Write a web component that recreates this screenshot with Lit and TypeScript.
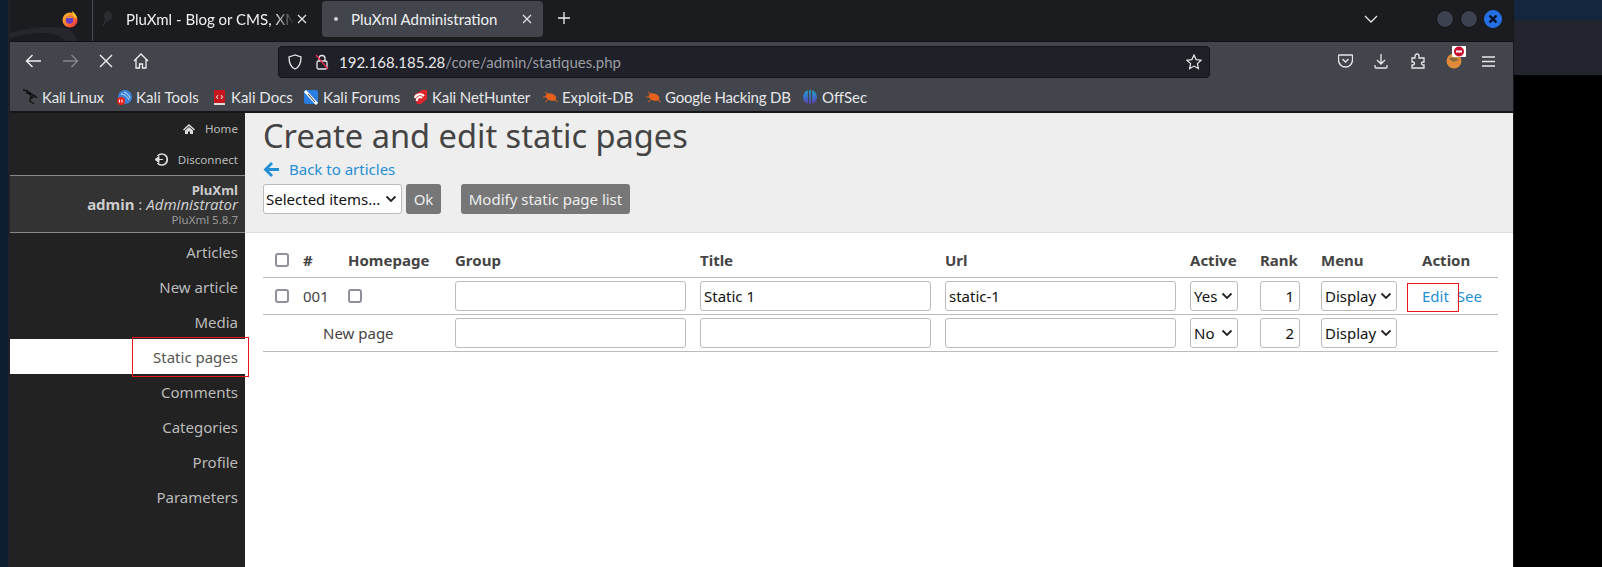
import { LitElement, html, css, svg } from "lit";
import { customElement } from "lit/decorators.js";

const chevron = "url(\"data:image/svg+xml,%3Csvg xmlns='http://www.w3.org/2000/svg' width='12' height='8'%3E%3Cpath d='M1.5 1.5 6 6l4.5-4.5' fill='none' stroke='%23222' stroke-width='1.8'/%3E%3C/svg%3E\")";

const bug = svg`<ellipse cx="9" cy="8" rx="5.500" ry="3.500" fill="#e8601c" transform="rotate(20 9 8)"/><path d="M1 8h4M3 3l4 3M3 13l4-3M13 11l3 2" stroke="#e8601c"/>`;

const bookmarks: { name: string; step: number; spacing: number; icon: ReturnType<typeof svg> }[] = [
  { name: "Kali Linux", step: 94, spacing: -0.2, icon: svg`<path d="M1 1c3 0 5 1 7 3 2 2 5 2 7 5M4 4c3 0 5 2 5 4s-2 2-1 4 3 1 4 3M12 8c-2 0-3 1-3 2" fill="none" stroke="#0d0d0d" stroke-width="1.300"/>` },
  { name: "Kali Tools", step: 95, spacing: 0.1, icon: svg`<circle cx="9" cy="8" r="7" fill="#3b82d8"/><path d="M5 5c3 0 6 2 8 6M8 3c3 1 5 3 6 6" stroke="#cfe3fa" fill="none"/><circle cx="5" cy="12" r="4" fill="#e1251b"/><path d="M3.500 10.500v3M6 10.500v3" stroke="#fff"/>` },
  { name: "Kali Docs", step: 92, spacing: 0, icon: svg`<rect x="3" y="1" width="11" height="14" fill="#c8161d"/><rect x="3" y="14" width="11" height="2" fill="#ddd"/><path d="M7 6 5.500 8 7 10M10 6l1.500 2L10 10" stroke="#fff" fill="none"/>` },
  { name: "Kali Forums", step: 109, spacing: 0, icon: svg`<rect x="1" y="1" width="14" height="14" rx="2" fill="#2a7de1"/><path d="M2 2l12 13" stroke="#fff" stroke-width="3"/><path d="M5 5l7 8" stroke="#333" stroke-width="1"/>` },
  { name: "Kali NetHunter", step: 130, spacing: -0.1, icon: svg`<path d="M2 6l8-5h5v9l-6 5H5z" fill="#e0242c"/><path d="M3 9a5 4 0 0 1 9-2M5 12a3 3 0 0 1 5-3" stroke="#fff" stroke-width="2" fill="none"/>` },
  { name: "Exploit-DB", step: 103, spacing: -0.1, icon: bug },
  { name: "Google Hacking DB", step: 157, spacing: -0.2, icon: bug },
  { name: "OffSec", step: 70, spacing: 0, icon: svg`<defs><linearGradient id="os" x1="0" y1="0" x2="0" y2="1"><stop offset="0" stop-color="#1fa3c8"/><stop offset="1" stop-color="#5b3fc0"/></linearGradient></defs><circle cx="8" cy="8" r="7" fill="url(#os)"/><path d="M6.500 1v14M9.500 1v14" stroke="#42454c" stroke-width="1.200"/>` },
];

const nav = ["Articles", "New article", "Media", "Static pages", "Comments", "Categories", "Profile", "Parameters"];

@customElement("app-root")
export class AppRoot extends LitElement {
  static styles = css`
    :host { display: flex; width: 1602px; height: 567px; overflow: hidden; background: #000; font-family: "Noto Sans", sans-serif; }
    * { box-sizing: border-box; }
    svg { display: block; flex: none; }

    .desk-left { width: 10px; flex: none; background: linear-gradient(90deg, #0e1d30 0 8px, #1e2127 8px); }
    .desk-right { flex: 1; display: flex; flex-direction: column; border-left: 1px solid #15171c; }
    .dr-a { height: 20px; background: #14263d; }
    .dr-b { height: 55px; background: #23252e; }
    .window { width: 1503px; flex: none; height: 567px; display: flex; flex-direction: column; position: relative; background: #fff; }

    .chrome-font { font-family: Lato, "Noto Sans", sans-serif; }

    .tabs { height: 41px; flex: none; background: #1b1c20; display: flex; align-items: flex-start; position: relative; color: #f0f0f2; font-size: 15px; overflow: hidden; }
    .wall { position: absolute; left: 0; bottom: 0; pointer-events: none; }
    .ff { margin: 10px 0 0 51px; }
    .sep { width: 1px; height: 41px; background: #4a4c52; margin-left: 13px; }
    .tab { height: 36px; margin-top: 1px; display: flex; align-items: center; position: relative; white-space: nowrap; }
    .tab1 { width: 229px; padding-left: 9px; }
    .tab1 .label { width: 168px; margin-left: 14px; overflow: hidden; -webkit-mask-image: linear-gradient(90deg, #000 88%, transparent); mask-image: linear-gradient(90deg, #000 88%, transparent); }
    .tab1 .x { margin-left: 3px; }
    .tab2 { width: 221px; background: #42454c; border-radius: 4px; padding-left: 9px; }
    .tab2 .label { width: 171px; margin-left: 13px; }
    .dot { width: 4px; height: 4px; margin-left: 3px; border-radius: 50%; background: #cfcfd4; }
    .plus { margin: 12px 0 0 15px; }
    .tabs-end { margin-left: auto; display: flex; align-items: center; height: 38px; }
    .tabs-end .chev { margin-right: 58px; }
    .wbtn { width: 18px; height: 18px; border-radius: 50%; background: #3c4150; border: 1px solid #111; margin-right: 6px; display: flex; align-items: center; justify-content: center; }
    .wbtn.close { background: #2470e8; border-color: #2470e8; margin-right: 11px; }

    .toolbar { height: 38px; flex: none; background: #42454c; display: flex; align-items: center; padding-top: 1px; border-top: 1px solid #111217; }
    .tool-left { display: flex; align-items: center; gap: 20px; margin-left: 15px; }
    .url { margin-left: 129px; width: 932px; height: 32px; margin-top: 1px; background: #1f2028; border: 1px solid #14151a; border-radius: 4px; display: flex; align-items: center; font-size: 15px; color: #e8e8ea; padding-left: 9px; }
    .url .lock { margin-left: 13px; }
    .url .addr { margin-left: 10px; white-space: nowrap; }
    .url .dim { color: #9b9ca2; }
    .url .star { margin-left: auto; margin-right: 7px; }
    .tool-right { display: flex; align-items: center; margin-left: 128px; gap: 21px; }
    .puzzle { margin-left: 2px; }
    .avatar { margin-top: -6px; }
    .burger { margin-left: -5px; }

    .marks { height: 32px; flex: none; background: #42454c; display: flex; align-items: center; padding: 4px 0 0 12px; font-size: 15px; color: #e6e6e8; white-space: nowrap; }
    .mark-item { display: flex; align-items: center; gap: 4px; flex: none; }
    .edge { height: 2px; flex: none; background: #15161a; }

    .page { flex: 1; display: flex; min-height: 0; color: #444; font-size: 15px; }
    .side { width: 235px; flex: none; background: #222; color: #bbb; text-align: right; }
    .side-top { height: 62px; padding: 0 7px; font-size: 11.600px; }
    .side-link { display: flex; justify-content: flex-end; align-items: center; height: 31px; gap: 10px; }
    .info { height: 58px; background: #333; border-top: 1px solid #888; border-bottom: 1px solid #888; padding: 7px 7px 0; line-height: 14px; }
    .info b { color: #ccc; }
    .info b.brand { display: block; font-size: 13.200px; line-height: 14px; }
    .info i { color: #ccc; }
    .info .who { display: block; height: 14px; line-height: 14px; }
    .info small { display: block; font-size: 11.500px; line-height: 17px; color: #999; }
    .nav { margin-top: 1px; }
    .nav a { display: block; height: 35px; line-height: 37px; padding-right: 7px; color: #bbb; }
    .nav a.on { background: #fff; color: #555; }

    .main { flex: 1; min-width: 0; }
    .head { height: 120px; background: #eee; border-bottom: 1px solid #ddd; padding: 0 18px; }
    h1 { margin: 0; font-weight: 400; font-size: 32.600px; line-height: 46px; color: #444; }
    .back { display: flex; align-items: center; height: 20px; gap: 10px; color: #258fd6; font-size: 15px; }
    .actions { display: flex; margin-top: 5px; height: 30px; }
    select, input[type="text"] { font: 15px "Noto Sans", sans-serif; color: #111; background-color: #fff; border: 1px solid #bbb; border-radius: 3px; height: 30px; margin: 0; outline: 0; }
    select { appearance: none; -webkit-appearance: none; padding: 0 0 0 3px; background-image: ${css([chevron] as unknown as TemplateStringsArray)}; background-repeat: no-repeat; background-position: right 4px center; }
    input[type="text"] { padding: 0 3px; display: block; }
    select.sel-act { width: 139px; padding-left: 2px; }
    .btn { height: 30px; background: #777; color: #eee; border-radius: 3px; display: flex; align-items: center; justify-content: center; }
    .ok { margin-left: 4px; width: 35px; }
    .mod { margin-left: 20px; width: 169px; }

    table { width: 1235px; margin: 10px 0 0 18px; border-collapse: collapse; table-layout: fixed; }
    th { height: 34px; text-align: left; font-weight: 700; padding: 0 7px 0; color: #444; border-bottom: 1px solid #bbb; white-space: nowrap; }
    td { height: 37px; padding: 0 7px; border-bottom: 1px solid #bbb; white-space: nowrap; color: #444; }
    .c0 { width: 33px; } .c1 { width: 45px; } .c2 { width: 107px; } .c3 { width: 245px; }
    .c6 { width: 70px; } .c7 { width: 61px; } .c8 { width: 90px; } .c9 { width: 94px; }
    .cb { padding-left: 12px; padding-right: 0; }
    .cbx { display: block; width: 14px; height: 14px; border: 2px solid #8f8f9d; border-radius: 3px; background: #fff; }
    .w { width: 231px; }
    .yn { width: 48px; }
    .rank { width: 40px; text-align: right; padding-right: 5px !important; }
    .menu { width: 76px; }
    .act { padding-left: 18px; padding-right: 0; }
    td a { color: #258fd6; }
    td a + a { margin-left: 8px; }
    .newp { padding-left: 60px; }

    .red { position: absolute; border: 1px solid #e8141e; pointer-events: none; }
    .red.a { left: 122px; top: 337px; width: 117px; height: 40px; }
    .red.b { left: 1397px; top: 283px; width: 52px; height: 29px; }
  `;

  private xIcon() {
    return html`<svg class="x" width="10" height="10" viewBox="0 0 10 10"><path d="M1 1l8 8M9 1 1 9" stroke="#e6e6ea" stroke-width="1.200"/></svg>`;
  }

  private row(id: boolean, title: string, url: string, active: string, rank: string) {
    return html`<tr>
      ${id
        ? html`<td class="cb"><span class="cbx"></span></td><td>001</td><td><span class="cbx"></span></td>`
        : html`<td colspan="3" class="newp">New page</td>`}
      <td><input class="w" type="text" .value=${""} /></td>
      <td><input class="w" type="text" .value=${title} /></td>
      <td><input class="w" type="text" .value=${url} /></td>
      <td><select class="yn"><option>${active}</option></select></td>
      <td><input class="rank" type="text" .value=${rank} /></td>
      <td><select class="menu"><option>Display</option></select></td>
      <td class="act">${id ? html`<a>Edit</a><a>See</a>` : ""}</td>
    </tr>`;
  }

  render() {
    return html`
      <div class="desk-left"></div>
      <div class="window">
        <div class="tabs chrome-font">
          <svg class="wall" width="90" height="18" viewBox="0 0 90 18"><path d="M0 10C20 4 45 2 60 6l8 12H56C48 8 25 8 0 15z" fill="#26272c"/></svg>
          <svg class="ff" width="18" height="18" viewBox="0 0 18 18">
            <defs><linearGradient id="g" x1="0" y1="0" x2="1" y2="1"><stop offset="0" stop-color="#ffc62c"/><stop offset=".6" stop-color="#ff6a2b"/><stop offset="1" stop-color="#e6194f"/></linearGradient></defs>
            <circle cx="9" cy="10" r="7.500" fill="url(#g)"/><path d="M11 1c3 2 5 5 5 8l-4-3z" fill="#ffc62c"/><circle cx="8.500" cy="10" r="3.800" fill="#6a3bc4"/><path d="M5 8c2-2 5-2 7 0-2 0-4 0-7 0z" fill="#ff9a2b"/>
          </svg>
          <div class="sep"></div>
          <div class="tab tab1">
            <svg width="10" height="16" viewBox="0 0 10 16"><ellipse cx="6" cy="5" rx="4" ry="5" fill="#2c2d31"/><path d="M4 9 1 15" stroke="#3a3b40"/></svg>
            <span class="label">PluXml - Blog or CMS, XML</span>${this.xIcon()}
          </div>
          <div class="tab tab2">
            <span class="dot"></span><span class="label">PluXml Administration</span>${this.xIcon()}
          </div>
          <svg class="plus" width="12" height="12" viewBox="0 0 12 12"><path d="M6 0v12M0 6h12" stroke="#f0f0f2" stroke-width="1.300"/></svg>
          <div class="tabs-end">
            <svg class="chev" width="14" height="8" viewBox="0 0 14 8"><path d="M1 1l6 6 6-6" fill="none" stroke="#e6e6ea" stroke-width="1.300"/></svg>
            <span class="wbtn"></span><span class="wbtn"></span>
            <span class="wbtn close"><svg width="10" height="10" viewBox="0 0 10 10"><path d="M1.500 1.500l7 7M8.500 1.500l-7 7" stroke="#05101f" stroke-width="2.400"/></svg></span>
          </div>
        </div>

        <div class="toolbar chrome-font">
          <div class="tool-left">
            <svg width="17" height="14" viewBox="0 0 17 14"><path d="M16 7H2M7.500 1 1.500 7l6 6" fill="none" stroke="#f0f0f2" stroke-width="1.400"/></svg>
            <svg width="17" height="14" viewBox="0 0 17 14"><path d="M1 7h14M9.500 1l6 6-6 6" fill="none" stroke="#85878c" stroke-width="1.400"/></svg>
            <svg width="14" height="14" viewBox="0 0 14 14"><path d="M1 1l12 12M13 1 1 13" stroke="#f0f0f2" stroke-width="1.400"/></svg>
            <svg width="16" height="16" viewBox="0 0 16 16"><path d="M1 8l7-7 7 7M3 6.500V15h3.500v-4h3v4H13V6.500" fill="none" stroke="#f0f0f2" stroke-width="1.300"/></svg>
          </div>
          <div class="url">
            <svg width="14" height="16" viewBox="0 0 14 16"><path d="M7 1 1 3c0 6 1 10 6 12 5-2 6-6 6-12z" fill="none" stroke="#e8e8ea" stroke-width="1.300"/></svg>
            <svg class="lock" width="14" height="16" viewBox="0 0 14 16"><rect x="2" y="7" width="10" height="8" rx="1.500" fill="none" stroke="#e8e8ea" stroke-width="1.300"/><path d="M4 7V4.500a3 3 0 0 1 6 0V7" fill="none" stroke="#e8e8ea" stroke-width="1.300"/><path d="M1 1l12 14" stroke="#e22850" stroke-width="1.400"/></svg>
            <span class="addr">192.168.185.28<span class="dim">/core/admin/statiques.php</span></span>
            <svg class="star" width="16" height="16" viewBox="0 0 16 16"><path d="M8 1l2.100 4.600 5 .6-3.700 3.400 1 5L8 12.100 3.600 14.600l1-5L.9 6.200l5-.6z" fill="none" stroke="#e8e8ea" stroke-width="1.200"/></svg>
          </div>
          <div class="tool-right">
            <svg width="15" height="14" viewBox="0 0 15 14"><path d="M1 1h13a.5.5 0 0 1 .5.500V6a7 7 0 0 1-14 0V1.500A.5.5 0 0 1 1 1z" fill="none" stroke="#e8e8ea" stroke-width="1.300"/><path d="M4.500 5 7.500 8l3-3" fill="none" stroke="#e8e8ea" stroke-width="1.300"/></svg>
            <svg width="14" height="16" viewBox="0 0 14 16"><path d="M7 1v10M3 7l4 4 4-4M1 12v2a1 1 0 0 0 1 1h10a1 1 0 0 0 1-1v-2" fill="none" stroke="#e8e8ea" stroke-width="1.300"/></svg>
            <svg class="puzzle" width="14" height="16" viewBox="0 0 14 16"><path d="M1 5h3V3a2 2 0 0 1 4 0v2h5v4h-1a1.500 1.500 0 0 0 0 3h1v3H1v-3h1a1.500 1.500 0 0 0 0-3H1z" fill="none" stroke="#e8e8ea" stroke-width="1.300"/></svg>
            <svg class="avatar" width="20" height="24" viewBox="0 0 20 24"><circle cx="8" cy="15" r="7.500" fill="#e08a3c"/><path d="M3 13c2-2 7-2 10 1l-6 2z" fill="#8a6a3a"/><rect x="6" y="0" width="14" height="11" rx="1" fill="#fff"/><circle cx="13" cy="5.500" r="5" fill="#c8102e"/><rect x="10" y="4.500" width="6" height="2" fill="#fff"/></svg>
            <svg class="burger" width="13" height="11" viewBox="0 0 13 11"><path d="M0 1h13M0 5.500h13M0 10h13" stroke="#e8e8ea" stroke-width="1.300"/></svg>
          </div>
        </div>

        <div class="marks chrome-font">
          ${bookmarks.map(
            (b) => html`<div class="mark-item" style="width:${b.step}px"><svg width="16" height="16" viewBox="0 0 16 16">${b.icon}</svg><span style="letter-spacing:${b.spacing}px">${b.name}</span></div>`
          )}
        </div>
        <div class="edge"></div>

        <div class="page">
          <aside class="side">
            <div class="side-top">
              <div class="side-link">
                <svg width="12" height="10" viewBox="0 0 12 10"><path d="M6 0 0 5.500l1 .9L6 2l5 4.400 1-.9zM2 6.500V10h3V7.500h2V10h3V6.500L6 3z" fill="#ddd"/></svg><span>Home</span>
              </div>
              <div class="side-link">
                <svg width="14" height="13" viewBox="0 0 14 13"><path d="M3.500 3a5.500 5.500 0 1 1 0 7" fill="none" stroke="#ddd" stroke-width="1.700"/><path d="M9 6.500H3.500M5 3.500 1 6.500l4 3z" fill="#ddd" stroke="#ddd"/></svg><span>Disconnect</span>
              </div>
            </div>
            <div class="info"><b class="brand">PluXml</b><span class="who"><b>admin</b> : <i>Administrator</i></span><small>PluXml 5.8.7</small></div>
            <nav class="nav">${nav.map((n) => html`<a class=${n === "Static pages" ? "on" : ""}>${n}</a>`)}</nav>
          </aside>
          <main class="main">
            <div class="head">
              <h1>Create and edit static pages</h1>
              <div class="back">
                <svg width="16" height="15" viewBox="0 0 16 15"><path d="M8 0l2 2-4 4h10v3H6l4 4-2 2-7.500-7.500z" fill="#258fd6"/></svg><span>Back to articles</span>
              </div>
              <div class="actions">
                <select class="sel-act"><option>Selected items...</option></select>
                <div class="btn ok">Ok</div>
                <div class="btn mod">Modify static page list</div>
              </div>
            </div>
            <table>
              <colgroup>
                <col class="c0" /><col class="c1" /><col class="c2" /><col class="c3" /><col class="c3" /><col class="c3" /><col class="c6" /><col class="c7" /><col class="c8" /><col class="c9" />
              </colgroup>
              <tr>
                <th class="cb"><span class="cbx"></span></th><th>#</th><th>Homepage</th><th>Group</th><th>Title</th><th>Url</th><th>Active</th><th>Rank</th><th>Menu</th><th class="act">Action</th>
              </tr>
              ${this.row(true, "Static 1", "static-1", "Yes", "1")}
              ${this.row(false, "", "", "No", "2")}
            </table>
          </main>
        </div>
        <div class="red a"></div>
        <div class="red b"></div>
      </div>
      <div class="desk-right"><div class="dr-a"></div><div class="dr-b"></div></div>
    `;
  }
}
